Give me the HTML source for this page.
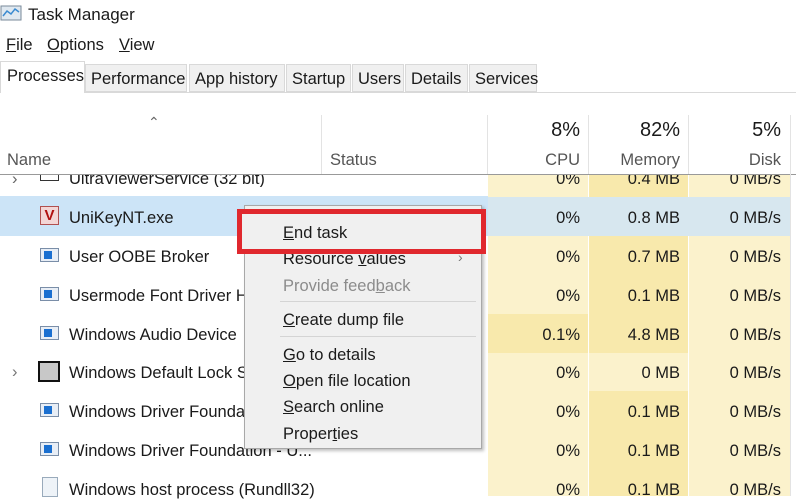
<!DOCTYPE html>
<html><head><style>
*{margin:0;padding:0;box-sizing:border-box}
body{width:796px;height:496px;overflow:hidden;background:#fff;font-family:"Liberation Sans",sans-serif;color:#1a1a1a;position:relative}
.a{position:absolute;white-space:nowrap}
.t{font-size:16.5px;margin-top:2px}
.r{text-align:right}
u{text-decoration:underline}
.tab{position:absolute;top:64px;height:28px;background:#f0f0f0;border:1px solid #d9d9d9;font-size:16.5px;line-height:29px;padding-left:5px}
.ic{position:absolute;left:40px;width:19px;height:14px;border:1px solid #7a8ea8;background:#e8eef6}
.ic:after{content:"";position:absolute;left:3px;top:2px;width:8px;height:8px;background:#1a6fd0}
.mi{position:absolute;left:283px;font-size:16.5px;color:#1a1a1a;margin-top:2px}
</style></head><body>
<svg class="a" style="left:0;top:4px" width="24" height="20"><rect x="1" y="2" width="20" height="14" fill="#dfe8f0" stroke="#7a8a9a"/><polyline points="3,12 7,7 11,10 15,5 19,8" fill="none" stroke="#3a8ad0" stroke-width="1.5"/></svg>
<div class="a" style="left:28px;top:5px;font-size:17px">Task Manager</div>
<div class="a" style="left:6px;top:36px;font-size:16.5px"><u>F</u>ile</div>
<div class="a" style="left:47px;top:36px;font-size:16.5px"><u>O</u>ptions</div>
<div class="a" style="left:119px;top:36px;font-size:16.5px"><u>V</u>iew</div>
<div class="a" style="left:0;top:92px;width:796px;height:1px;background:#d9d9d9"></div>
<div class="tab" style="left:0;top:61px;height:32px;width:85px;background:#fff;border-bottom:none;padding-left:6px">Processes</div>
<div class="tab" style="left:85px;width:102px">Performance</div>
<div class="tab" style="left:189px;width:96px">App history</div>
<div class="tab" style="left:286px;width:65px">Startup</div>
<div class="tab" style="left:352px;width:52px">Users</div>
<div class="tab" style="left:405px;width:63px">Details</div>
<div class="tab" style="left:469px;width:68px">Services</div>
<div class="a" style="left:148px;top:114px;font-size:14px;color:#666">&#8963;</div>
<div class="a" style="left:321px;top:115px;width:1px;height:60px;background:#e3e3e3"></div>
<div class="a" style="left:487px;top:115px;width:1px;height:60px;background:#e3e3e3"></div>
<div class="a" style="left:588px;top:115px;width:1px;height:60px;background:#e3e3e3"></div>
<div class="a" style="left:688px;top:115px;width:1px;height:60px;background:#e3e3e3"></div>
<div class="a t" style="left:7px;top:149px;color:#555">Name</div>
<div class="a t" style="left:330px;top:149px;color:#555">Status</div>
<div class="a r" style="left:488px;width:92px;top:119px;font-size:20px">8%</div>
<div class="a r" style="left:589px;width:91px;top:119px;font-size:20px">82%</div>
<div class="a r" style="left:689px;width:92px;top:119px;font-size:20px">5%</div>
<div class="a r t" style="left:488px;width:92px;top:149px;color:#555">CPU</div>
<div class="a r t" style="left:589px;width:91px;top:149px;color:#555">Memory</div>
<div class="a r t" style="left:689px;width:92px;top:149px;color:#555">Disk</div>
<div class="a" style="left:488px;top:175px;width:100px;height:321px;background:#fbf2cc"></div>
<div class="a" style="left:589px;top:175px;width:99px;height:321px;background:#f8e9ac"></div>
<div class="a" style="left:689px;top:175px;width:101px;height:321px;background:#fbf2cc"></div>
<div class="a" style="left:488px;top:314px;width:100px;height:39px;background:#f8e9ac"></div>
<div class="a" style="left:589px;top:353px;width:99px;height:38px;background:#fbf2cc"></div>
<div class="a" style="left:0;top:197px;width:790px;height:39px;background:#d7e7ef"></div>
<div class="a" style="left:0;top:196px;width:488px;height:40px;background:#cce4f7"></div>
<div class="a" style="left:0;top:174px;width:796px;height:1px;background:#999"></div>
<div class="a" style="left:790px;top:115px;width:1px;height:381px;background:#e3e3e3"></div>
<div class="a" style="left:0;top:175px;width:796px;height:12px;overflow:hidden">
 <div class="a t" style="left:12px;top:-7px;color:#666">&#8250;</div>
 <div class="a" style="left:40px;top:-4px;width:19px;height:10px;border:1px solid #333"></div>
 <div class="a t" style="left:69px;top:-7px">UltraViewerService (32 bit)</div>
 <div class="a r t" style="left:488px;width:92px;top:-7px">0%</div>
 <div class="a r t" style="left:589px;width:91px;top:-7px">0.4 MB</div>
 <div class="a r t" style="left:689px;width:92px;top:-7px">0 MB/s</div>
</div>
<div class="a" style="left:40px;top:206px;width:19px;height:19px;border:1px solid #b05050;background:#f3d6d6;color:#b01010;font-size:15px;font-weight:bold;text-align:center;line-height:18px">V</div>
<div class="a t" style="left:69px;top:207px">UniKeyNT.exe</div>
<div class="ic" style="top:248px"></div><div class="a t" style="left:69px;top:246px">User OOBE Broker</div>
<div class="ic" style="top:287px"></div><div class="a t" style="left:69px;top:285px">Usermode Font Driver H</div>
<div class="ic" style="top:326px"></div><div class="a t" style="left:69px;top:324px">Windows Audio Device</div>
<div class="a t" style="left:12px;top:361px;color:#777">&#8250;</div>
<div class="a" style="left:38px;top:361px;width:22px;height:21px;border:2px solid #111;background:#c8c8c8"></div>
<div class="a t" style="left:69px;top:362px">Windows Default Lock S</div>
<div class="ic" style="top:403px"></div><div class="a t" style="left:69px;top:401px">Windows Driver Founda</div>
<div class="ic" style="top:442px"></div><div class="a t" style="left:69px;top:440px">Windows Driver Foundation - U...</div>
<div class="a" style="left:42px;top:477px;width:16px;height:20px;border:1px solid #9ab;background:#eef3f8"></div>
<div class="a t" style="left:69px;top:479px">Windows host process (Rundll32)</div>
<div class="a r t" style="left:488px;width:92px;top:207px">0%</div><div class="a r t" style="left:589px;width:91px;top:207px">0.8 MB</div><div class="a r t" style="left:689px;width:92px;top:207px">0 MB/s</div>
<div class="a r t" style="left:488px;width:92px;top:246px">0%</div><div class="a r t" style="left:589px;width:91px;top:246px">0.7 MB</div><div class="a r t" style="left:689px;width:92px;top:246px">0 MB/s</div>
<div class="a r t" style="left:488px;width:92px;top:285px">0%</div><div class="a r t" style="left:589px;width:91px;top:285px">0.1 MB</div><div class="a r t" style="left:689px;width:92px;top:285px">0 MB/s</div>
<div class="a r t" style="left:488px;width:92px;top:324px">0.1%</div><div class="a r t" style="left:589px;width:91px;top:324px">4.8 MB</div><div class="a r t" style="left:689px;width:92px;top:324px">0 MB/s</div>
<div class="a r t" style="left:488px;width:92px;top:362px">0%</div><div class="a r t" style="left:589px;width:91px;top:362px">0 MB</div><div class="a r t" style="left:689px;width:92px;top:362px">0 MB/s</div>
<div class="a r t" style="left:488px;width:92px;top:401px">0%</div><div class="a r t" style="left:589px;width:91px;top:401px">0.1 MB</div><div class="a r t" style="left:689px;width:92px;top:401px">0 MB/s</div>
<div class="a r t" style="left:488px;width:92px;top:440px">0%</div><div class="a r t" style="left:589px;width:91px;top:440px">0.1 MB</div><div class="a r t" style="left:689px;width:92px;top:440px">0 MB/s</div>
<div class="a r t" style="left:488px;width:92px;top:479px">0%</div><div class="a r t" style="left:589px;width:91px;top:479px">0.1 MB</div><div class="a r t" style="left:689px;width:92px;top:479px">0 MB/s</div>
<div class="a" style="left:244px;top:205px;width:238px;height:244px;background:#f0f0f0;border:1px solid #a8a8a8;box-shadow:2px 2px 3px rgba(0,0,0,.25)"></div>
<div class="a" style="left:280px;top:301px;width:196px;height:1px;background:#d4d4d4"></div>
<div class="a" style="left:280px;top:336px;width:196px;height:1px;background:#d4d4d4"></div>
<div class="mi" style="top:248px"><span>Resource <u>v</u>alues</span></div>
<div class="a" style="left:458px;top:249px;font-size:14px;color:#777">&#8250;</div>
<div class="mi" style="top:275px;color:#8c8c8c">Provide feed<u>b</u>ack</div>
<div class="mi" style="top:309px"><u>C</u>reate dump file</div>
<div class="mi" style="top:344px"><u>G</u>o to details</div>
<div class="mi" style="top:370px"><u>O</u>pen file location</div>
<div class="mi" style="top:396px"><u>S</u>earch online</div>
<div class="mi" style="top:423px">Proper<u>t</u>ies</div>
<div class="a" style="left:237px;top:209px;width:249px;height:45px;border:5px solid #e0282e;background:#f0f0f0"></div>
<div class="mi" style="top:222px"><u>E</u>nd task</div>
</body></html>
